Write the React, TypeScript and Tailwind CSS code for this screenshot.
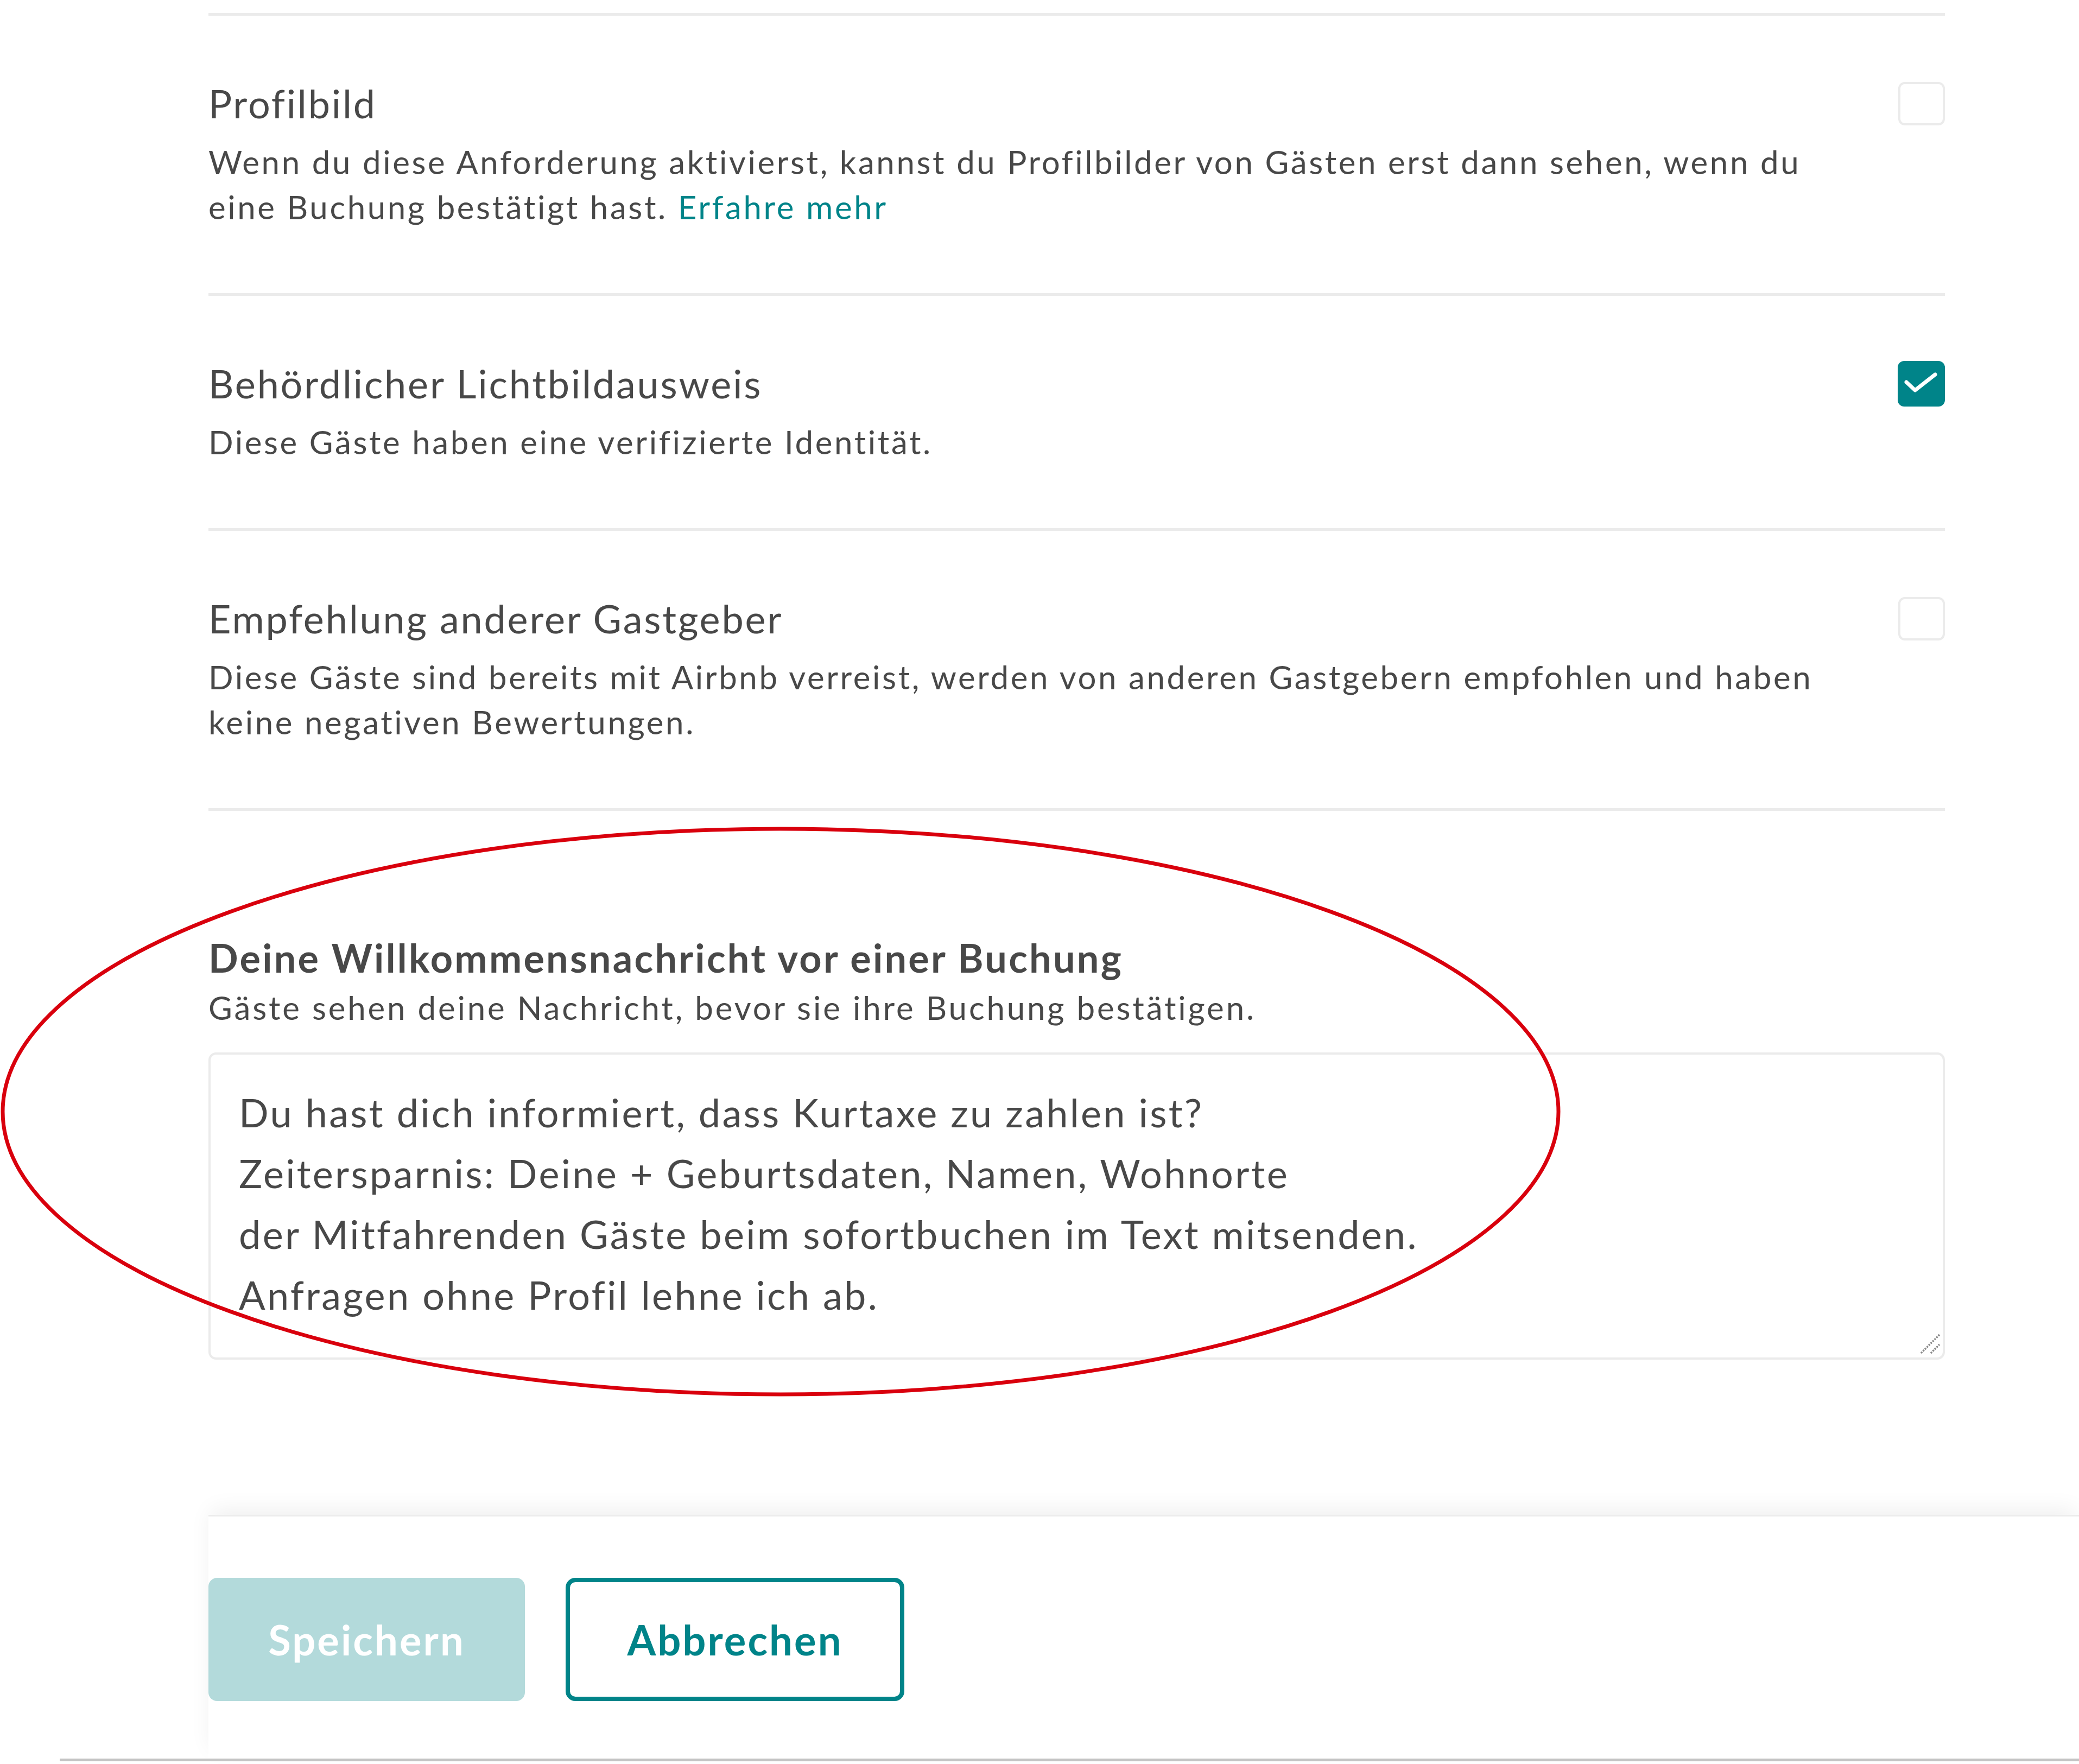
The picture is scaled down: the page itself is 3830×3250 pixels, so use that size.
import React from 'react';

const font = "font-['Lato','Noto_Sans',sans-serif]";

type RowProps = {
  title: string;
  checked?: boolean;
  children: React.ReactNode;
};

const Checkbox = ({ checked }: { checked?: boolean }) =>
  checked ? (
    <div className="w-[87px] h-[84px] shrink-0 mt-[4px] rounded-[12px] bg-[#008489] flex items-center justify-center">
      <svg width="87" height="84" viewBox="0 0 87 84">
        <polyline points="16,39 32,54 69,25" fill="none" stroke="white" strokeWidth="7" strokeLinecap="round" strokeLinejoin="round" />
      </svg>
    </div>
  ) : (
    <div className="w-[86px] h-[80px] shrink-0 mt-[6px] rounded-[12px] border-[4px] border-[#ebebeb] bg-white" />
  );

const Row = ({ title, checked, children }: RowProps) => (
  <div className="flex items-start justify-between pt-[116px] pb-[117px] border-b-[5px] border-[#ebebeb]">
    <div className="w-[3040px]">
      <div className="text-[72px] leading-[90px] tracking-[0.039em] text-[#484848]">{title}</div>
      <p className="mt-[22px] text-[60px] leading-[83px] tracking-[0.06em] text-[#484848]">{children}</p>
    </div>
    <Checkbox checked={checked} />
  </div>
);

const message = `Du hast dich informiert, dass Kurtaxe zu zahlen ist?
Zeitersparnis: Deine + Geburtsdaten, Namen, Wohnorte
der Mitfahrenden Gäste beim sofortbuchen im Text mitsenden.
Anfragen ohne Profil lehne ich ab.`;

export default function App() {
  return (
    <div className={`relative w-[3830px] h-[3250px] overflow-hidden bg-white ${font}`}>
      <div className="pl-[384px]">
        <div className="w-[3199px]">
          <div className="mt-[24px] h-[5px] bg-[#ebebeb]" />

          <Row title="Profilbild">
            Wenn du diese Anforderung aktivierst, kannst du Profilbilder von Gästen erst dann sehen, wenn du eine Buchung bestätigt hast. <span className="text-[#008489]">Erfahre mehr</span>
          </Row>
          <Row title="Behördlicher Lichtbildausweis" checked>
            Diese Gäste haben eine verifizierte Identität.
          </Row>
          <Row title="Empfehlung anderer Gastgeber">
            Diese Gäste sind bereits mit Airbnb verreist, werden von anderen Gastgebern empfohlen und haben keine negativen Bewertungen.
          </Row>

          {/* Welcome message */}
          <div className="mt-[225px]">
            <div className="text-[72px] leading-[90px] font-bold tracking-[0.045em] text-[#484848]">
              Deine Willkommensnachricht vor einer Buchung
            </div>
            <div className="mt-[6px] text-[60px] leading-[83px] tracking-[0.064em] text-[#484848]">
              Gäste sehen deine Nachricht, bevor sie ihre Buchung bestätigen.
            </div>
            <div className="relative mt-[41px]">
              <textarea
                readOnly
                value={message}
                className="block w-full h-[566px] resize-none rounded-[14px] border-[4px] border-[#ebebeb] bg-white pt-[50px] pl-[52px] pr-[52px] text-[72px] leading-[112px] tracking-[0.046em] text-[#484848] outline-none"
              />
              <svg className="absolute right-[8px] bottom-[10px]" width="40" height="40" viewBox="0 0 40 40">
                <line x1="4" y1="38" x2="38" y2="4" stroke="#8a8a8a" strokeWidth="3.5" strokeDasharray="3 2" />
                <line x1="22" y1="38" x2="38" y2="22" stroke="#8a8a8a" strokeWidth="3.5" strokeDasharray="3 2" />
              </svg>
            </div>
          </div>
        </div>

        {/* Footer */}
        <div className="mt-[286px] border-t-[3px] border-[#ececec] bg-white shadow-[0_-14px_40px_-6px_rgba(0,0,0,0.07)] pt-[113px] pb-[106px]">
          <div className="flex gap-[75px]">
            <button className="w-[583px] h-[227px] rounded-[16px] bg-[#b3dadb] text-[76px] font-bold tracking-[0.04em] text-white">
              Speichern
            </button>
            <button className="w-[624px] h-[227px] rounded-[18px] border-[8px] border-[#008489] bg-white text-[76px] font-bold tracking-[0.04em] text-[#008489]">
              Abbrechen
            </button>
          </div>
        </div>
      </div>
      <div className="ml-[110px] h-[5px] bg-[#c4c4c4]" />

      {/* Annotation */}
      <svg className="absolute left-0 top-0 pointer-events-none" width="3830" height="3250">
        <ellipse cx="1438" cy="2048" rx="1433" ry="521" fill="none" stroke="#d9000d" strokeWidth="7" />
      </svg>
    </div>
  );
}
